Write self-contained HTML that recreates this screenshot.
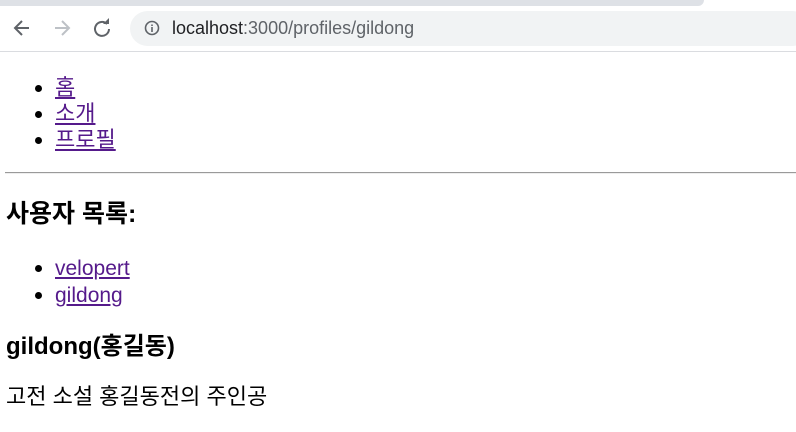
<!DOCTYPE html>
<html><head><meta charset="utf-8"><style>
*{margin:0;padding:0;box-sizing:border-box}
body{width:796px;height:432px;overflow:hidden;background:#fff;position:relative;font-family:"Liberation Sans","Noto Sans CJK KR",sans-serif;color:#000}
.a{position:absolute;white-space:nowrap;line-height:1}
a{color:#551a8b;text-decoration:underline}
.li{font-size:22px}
.le{font-size:21px}
.b{position:absolute;width:7px;height:7px;border-radius:50%;background:#000;left:35px}
h3{font-size:25px;font-weight:bold}
</style></head><body>
<div style="position:absolute;left:0;top:0;width:704px;height:6px;background:#dee1e6;border-bottom-right-radius:6px"></div>
<div style="position:absolute;left:0;top:51px;width:796px;height:1px;background:#dadce0"></div>
<div style="position:absolute;left:130px;top:11px;width:680px;height:35px;background:#f1f3f4;border-radius:18px"></div>
<svg style="position:absolute;left:12px;top:18px" width="20" height="20" viewBox="0 0 20 20"><path d="M17 10H4M10 3L3 10l7 7" stroke="#5f6368" stroke-width="2" fill="none"/></svg>
<svg style="position:absolute;left:52px;top:18px" width="20" height="20" viewBox="0 0 20 20"><path d="M3 10h13M10 3l7 7-7 7" stroke="#bdc1c6" stroke-width="2" fill="none"/></svg>
<svg style="position:absolute;left:92px;top:18px" width="20" height="20" viewBox="0 0 20 20"><path d="M15 6A7 7 0 1 0 17 11" stroke="#5f6368" stroke-width="2" fill="none"/><path d="M11 6h6V0z" fill="#5f6368"/></svg>
<svg style="position:absolute;left:144px;top:20px" width="16" height="16" viewBox="0 0 16 16"><circle cx="8" cy="8" r="6.5" stroke="#5f6368" stroke-width="1.6" fill="none"/><path d="M8 7v5M8 4.5v1.5" stroke="#5f6368" stroke-width="1.6"/></svg>
<div class="a" style="left:172px;top:19px;font-size:18px;color:#202124">localhost<span style="color:#5f6368">:3000/profiles/gildong</span></div>

<div class="b" style="top:85px"></div><div class="a li" style="left:55px;top:77px"><a>홈</a></div>
<div class="b" style="top:111px"></div><div class="a li" style="left:55px;top:103px"><a>소개</a></div>
<div class="b" style="top:137px"></div><div class="a li" style="left:55px;top:129px"><a>프로필</a></div>
<div style="position:absolute;left:5px;top:172px;width:791px;height:2px;border-top:1px solid #9a9a9a;border-bottom:1px solid #eee"></div>
<h3 class="a" style="left:6px;top:202px">사용자 목록:</h3>
<div class="b" style="top:265px"></div><div class="a le" style="left:55px;top:258px"><a>velopert</a></div>
<div class="b" style="top:292px"></div><div class="a le" style="left:55px;top:285px"><a>gildong</a></div>
<h3 class="a" style="left:6px;top:335px;font-size:24px">gildong(홍길동)</h3>
<div class="a li" style="left:6px;top:386px">고전 소설 홍길동전의 주인공</div>
</body></html>
